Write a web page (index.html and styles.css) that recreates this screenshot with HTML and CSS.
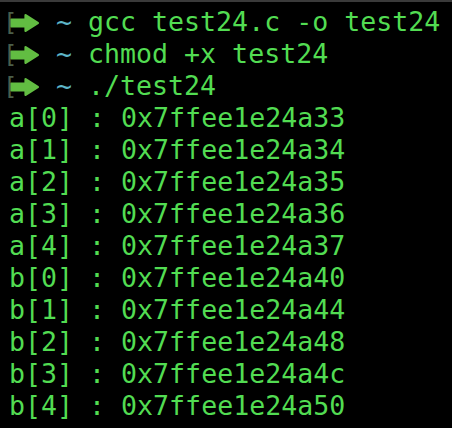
FILE: index.html
```html
<!DOCTYPE html>
<html>
<head>
<meta charset="utf-8">
<link rel="stylesheet" href="styles.css">
</head>
<body>
<div class="term">
  <div class="line prompt"><span class="mark">[</span><svg class="arrow" viewBox="0 0 28 18"><path d="M2 6 H15 V2 L26 9 L15 16 V12 H2 Z"/></svg><span class="tilde">~</span> gcc test24.c -o test24</div>
  <div class="line prompt"><span class="mark">[</span><svg class="arrow" viewBox="0 0 28 18"><path d="M2 6 H15 V2 L26 9 L15 16 V12 H2 Z"/></svg><span class="tilde">~</span> chmod +x test24</div>
  <div class="line prompt"><span class="mark">[</span><svg class="arrow" viewBox="0 0 28 18"><path d="M2 6 H15 V2 L26 9 L15 16 V12 H2 Z"/></svg><span class="tilde">~</span> ./test24</div>
  <div class="line">a[0] : 0x7ffee1e24a33</div>
  <div class="line">a[1] : 0x7ffee1e24a34</div>
  <div class="line">a[2] : 0x7ffee1e24a35</div>
  <div class="line">a[3] : 0x7ffee1e24a36</div>
  <div class="line">a[4] : 0x7ffee1e24a37</div>
  <div class="line">b[0] : 0x7ffee1e24a40</div>
  <div class="line">b[1] : 0x7ffee1e24a44</div>
  <div class="line">b[2] : 0x7ffee1e24a48</div>
  <div class="line">b[3] : 0x7ffee1e24a4c</div>
  <div class="line">b[4] : 0x7ffee1e24a50</div>
</div>
</body>
</html>
```
FILE: styles.css
```css
html, body {
  margin: 0;
  padding: 0;
  background: #000;
}
.term {
  width: 452px;
  height: 428px;
  box-sizing: border-box;
  border-top: 2px solid #3a3a3a;
  padding: 4px 0 0 9px;
  background: #000;
  font-family: "DejaVu Sans Mono", monospace;
  font-size: 26.6px;
  line-height: 32px;
  color: #52dc52;
  overflow: hidden;
}
.line {
  height: 32px;
  position: relative;
  white-space: pre;
}
.mark {
  position: absolute;
  left: -6px;
  top: 1px;
  color: #4a5e4a;
  font-size: 24px;
}
.arrow {
  display: inline-block;
  width: 31px;
  height: 20px;
  margin-left: 0;
  margin-right: 16px;
  vertical-align: -2px;
}
.arrow path {
  fill: #62bd42;
  stroke: #62bd42;
  stroke-width: 2.2;
  stroke-linejoin: round;
}
.tilde {
  color: #5db6c8;
}
```
